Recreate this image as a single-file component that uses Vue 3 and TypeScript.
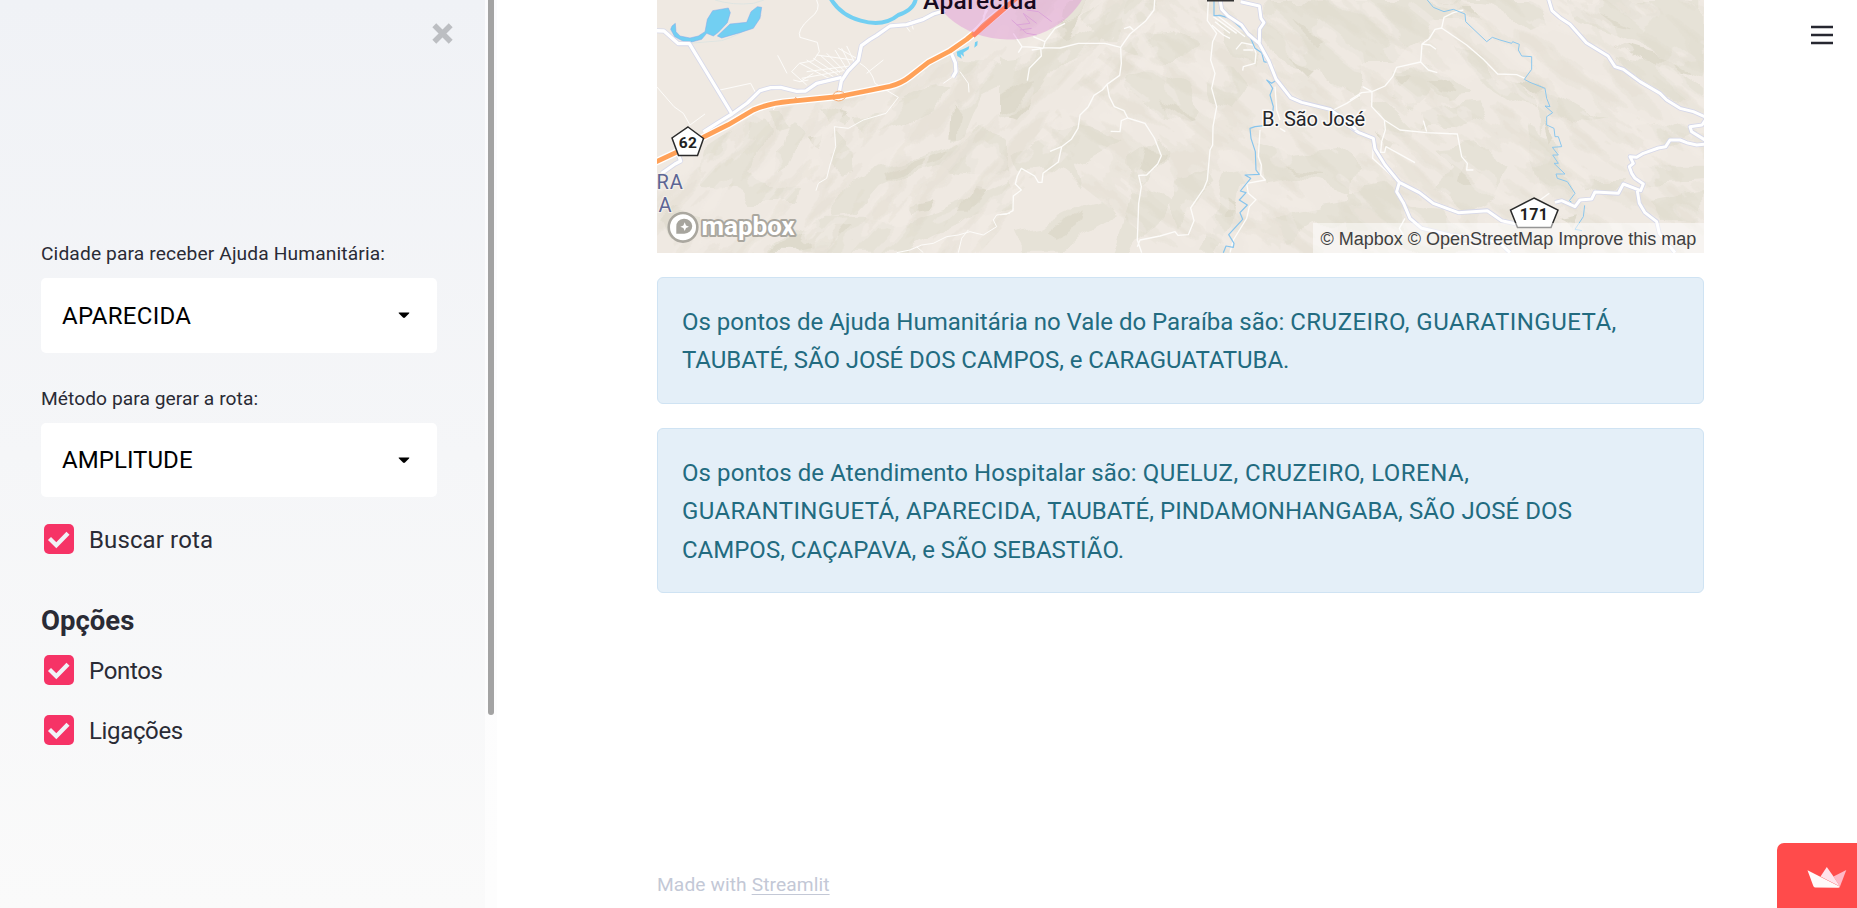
<script setup lang="ts">
import { ref } from 'vue'

interface Run {
  text: string
  fit: string
}

const selects = ref([
  { label: 'Cidade para receber Ajuda Humanitária:', value: 'APARECIDA', kind: 'city' },
  { label: 'Método para gerar a rota:', value: 'AMPLITUDE', kind: 'method' },
])

const search = ref(true)
const options = ref([
  { label: 'Pontos', checked: true },
  { label: 'Ligações', checked: true },
])

const notices: Run[][][] = [
  [
    [
      { text: 'Os pontos de Ajuda Humanitária no Vale do Paraíba são: ', fit: 'plain' },
      { text: 'CRUZEIRO, GUARATINGUETÁ,', fit: 'loose' },
    ],
    [{ text: 'TAUBATÉ, SÃO JOSÉ DOS CAMPOS, e CARAGUATATUBA.', fit: 'snug' }],
  ],
  [
    [
      { text: 'Os pontos de Atendimento Hospitalar são: ', fit: 'lead' },
      { text: 'QUELUZ, CRUZEIRO, LORENA,', fit: 'loose' },
    ],
    [
      { text: 'GUARANTINGUETÁ, APARECIDA, ', fit: 'caps' },
      { text: 'TAUBATÉ, PINDAMONHANGABA, SÃO JOSÉ DOS', fit: 'caps-end' },
    ],
    [{ text: 'CAMPOS, CAÇAPAVA, e SÃO SEBASTIÃO.', fit: 'plain' }],
  ],
]

/* Hill shading, drawn in thirds of a pixel from three neighbouring origins. */
const shadeWest = [
  'M170 430L240 390L300 350L330 370L300 410L320 450L290 520L350 560L450 570L440 600L300 600L240 570L150 560Z',
  'M360 330L400 330L420 390L370 400Z', 'M400 410L440 370L470 400L430 460L410 500L380 520Z',
  'M500 320L560 330L620 360L600 390L540 370Z', 'M570 400L600 430L605 520L570 530L540 500Z',
  'M620 350L690 340L740 300L850 250L900 270L850 330L780 370L700 400L640 400Z',
  'M650 170L700 110L790 80L880 90L900 140L830 170L760 190L700 210Z',
  'M940 190L1060 190L1080 240L1000 280L950 400L900 420L910 300Z',
  'M590 540L700 500L800 470L900 440L990 390L1080 410L1080 520L970 520L860 500L760 530L690 560L620 640L540 650Z',
  'M340 758L450 690L520 650L640 650L760 670L860 640L960 600L1080 540L1080 620L900 690L760 758Z',
  'M30 660L80 620L150 640L120 700L60 720Z', 'M330 360L360 400L300 490L270 500L290 430Z',
]
const shadeWestDeep = [
  'M700 520L790 480L900 450L880 480L780 510L710 545Z', 'M350 758L470 690L600 680L540 740L440 758Z',
  'M970 560L1010 570L960 650L930 650Z', 'M900 320L930 360L920 410L895 410Z', 'M760 620L850 600L830 630L770 640Z',
  'M480 410L520 400L500 450Z', 'M580 335L610 345L590 370Z',
]
const shadeMid = [
  'M0 170L90 160L130 120L240 90L300 110L260 160L180 190L120 280L60 330L0 350Z',
  'M240 60L340 0L460 0L440 60L380 130L300 130Z', 'M200 0L260 0L240 50L190 80Z',
  'M380 230L470 200L560 250L600 330L560 370L470 340L400 300Z', 'M330 140L430 100L520 90L600 130L560 180L450 180Z',
  'M40 470L160 390L240 380L300 400L360 420L320 450L230 500L250 560L200 520L130 500L60 510Z',
  'M390 470L480 410L500 450L430 560L520 600L480 660L420 720L400 760L350 758L400 600Z',
  'M530 540L620 510L640 560L570 620L540 680L510 620Z', 'M620 200L700 210L740 260L690 330L640 300Z',
  'M670 520L740 500L720 600L690 680L650 758L600 758L640 640Z', 'M790 0L1080 0L1080 290L960 220L860 200L790 110Z',
  'M770 430L860 460L1000 440L1080 500L1060 580L900 530L800 550Z', 'M820 650L960 620L1080 600L1080 670L940 670L860 720Z',
  'M30 700L130 680L250 620L330 600L360 640L250 700L180 758L60 758Z', 'M650 60L760 110L780 190L700 170Z',
]
const shadeMidDeep = [
  'M0 290L60 250L110 240L50 320L0 340Z', 'M440 440L490 450L460 510L420 510Z', 'M150 80L240 50L200 110Z',
  'M480 310L580 360L540 370Z', 'M690 590L720 600L690 660L665 660Z', 'M870 40L980 130L960 150Z', 'M860 170L950 220L930 240Z',
  'M150 690L240 640L220 690L160 720Z', 'M30 340L100 300L60 350Z', 'M850 500L960 520L940 530Z',
]
const shadeEast = [
  'M0 0L230 0L320 30L340 60L250 60L210 130L130 180L0 180Z', 'M270 0L430 20L530 90L590 70L540 0Z',
  'M120 210L250 190L310 230L360 290L300 300L240 260L190 320L130 300Z', 'M210 330L380 310L410 350L320 390L220 390Z',
  'M60 300L130 330L190 390L180 470L120 420Z', 'M250 440L380 430L470 500L430 600L350 640L250 560L310 500Z',
  'M320 130L400 170L440 230L520 250L560 330L500 320L420 270L350 200Z', 'M650 0L1060 0L1060 240L960 200L900 150L780 100L680 60Z',
  'M800 170L980 210L1060 270L1060 310L940 280L840 220Z', 'M560 270L650 300L770 370L690 360L600 330L570 410Z',
  'M520 390L620 430L650 520L670 590L600 640L560 560L540 480Z', 'M860 380L950 360L1040 400L960 430L880 430Z',
  'M880 500L1060 500L1060 540L900 550Z', 'M900 600L1060 570L1060 660L930 660Z', 'M680 540L820 540L800 570L700 580Z',
  'M0 580L110 560L180 620L280 630L390 758L200 758L60 690L0 700Z',
]
const shadeEastDeep = [
  'M700 20L850 90L760 70Z', 'M790 130L960 180L1020 220L880 190Z', 'M240 240L300 240L320 280L270 270Z',
  'M340 490L400 520L380 560L330 540Z', 'M120 220L180 220L150 260Z', 'M80 400L140 430L120 460Z',
  'M580 360L620 420L600 440Z', 'M300 20L360 20L400 60L350 50Z', 'M510 250L590 260L560 290Z', 'M640 650L690 640L670 690Z',
]

const whiteRoads = [
  'M18 92L42 93L85 131L118 131L166 210L246 342', 'M160 396L205 367L246 342L292 309L330 272L362 263L392 262L440 274L467 273L500 250L575 232',
  'M568 275L574 243L594 213L625 181L634 137L660 118L680 106L720 78L770 74L820 58L850 42L886 31',
  'M904 160L916 188L918 215L908 232', 'M35 520L75 492L92 483L84 462',
]
const valleyRoads = [
  'M1709 -10L1715 28L1734 48L1774 74L1794 102L1828 131L1857 184L1878 237L1922 293L1955 307L2040 328L2095 368L2118 389',
  'M1772 5L1828 18L1833 55L1842 68L1829 87L1828 128',
]
const eastRoads = [
  'M595 -5L606 32L630 53L660 73L709 128L774 168L795 200L820 208L870 245L930 280L950 300L990 325L1030 335L1070 353',
  'M1070 355L1056 375L1020 380L1025 395L1065 420M1070 432L1040 435L1010 428L990 420L960 420L947 440L925 444L880 460L860 472L840 470L850 490L838 500L845 520L855 535L880 552L872 572L820 552L805 580L735 576L725 597L690 600L675 620L635 602L615 607M862 572L868 610L885 638L920 665L928 700L975 758',
  'M-30 360L25 397L70 415L75 447L105 495L148 547L208 578L250 610L325 638L412 632L455 662L500 672M148 547L140 575L160 608L180 655L215 685L300 705L390 715L450 730L480 758',
]
const highway = 'M15 487L90 452L165 409L235 374L310 330Q355 310 420 304L570 289L650 273L720 259Q755 250 780 230L835 187L900 153L950 118L1080 10'
</script>

<template>
  <div class="app">
    <aside class="sidebar">
      <div class="controls">
        <button class="close" aria-label="Fechar">
          <svg width="21" height="21" viewBox="0 0 21 21"><path d="M2.3 2.3L18.7 18.7M18.7 2.3L2.3 18.7" stroke="#bcbec2" stroke-width="5.5" /></svg>
        </button>
        <div v-for="s in selects" :key="s.kind" class="field">
          <div class="label" :class="s.kind">{{ s.label }}</div>
          <div class="select" :class="s.kind">
            <span>{{ s.value }}</span>
            <svg width="12" height="7" viewBox="0 0 12 7"><path d="M0.8 0.5H11.2Q11.6 1 11 1.6L7 5.6Q6 6.4 5 5.6L1 1.6Q.4 1 .8 .5Z" fill="#000" /></svg>
          </div>
        </div>
        <label class="check" @click="search = !search">
          <span class="box" :class="{ off: !search }"><svg v-if="search" width="30" height="30" viewBox="0 0 30 30"><path d="M5.5 14.5L12.3 21.2L24 9.3" fill="none" stroke="#f0f2f6" stroke-width="4.3" /></svg></span>
          <span class="check-text">Buscar rota</span>
        </label>
        <h2>Opções</h2>
        <label v-for="o in options" :key="o.label" class="check option" @click="o.checked = !o.checked">
          <span class="box" :class="{ off: !o.checked }"><svg v-if="o.checked" width="30" height="30" viewBox="0 0 30 30"><path d="M5.5 14.5L12.3 21.2L24 9.3" fill="none" stroke="#f0f2f6" stroke-width="4.3" /></svg></span>
          <span class="check-text tight">{{ o.label }}</span>
        </label>
      </div>
      <div class="track"><div class="thumb"></div></div>
    </aside>

    <main class="main">
      <div class="map">
        <svg width="1047" height="253" viewBox="657 0 1047 253">
          <defs>
            <filter id="relief" x="0" y="0" width="100%" height="100%" color-interpolation-filters="sRGB">
              <feTurbulence type="fractalNoise" baseFrequency="0.017 0.05" numOctaves="3" seed="11" />
              <feColorMatrix values="0 0 0 0 .86  0 0 0 0 .845  0 0 0 0 .785  4 0 0 0 -1.85" />
              <feComponentTransfer><feFuncA type="discrete" tableValues="0 .4 .6 .85" /></feComponentTransfer>
              <feGaussianBlur stdDeviation=".5" />
            </filter>
            <filter id="lights" x="0" y="0" width="100%" height="100%" color-interpolation-filters="sRGB">
              <feTurbulence type="fractalNoise" baseFrequency="0.02 0.05" numOctaves="2" seed="4" />
              <feColorMatrix values="0 0 0 0 .945  0 0 0 0 .922  0 0 0 0 .897  4 0 0 0 -1.9" />
              <feComponentTransfer><feFuncA type="discrete" tableValues="0 .5 .8" /></feComponentTransfer>
              <feGaussianBlur stdDeviation=".5" />
            </filter>
            <filter id="rough" x="-5%" y="-5%" width="110%" height="110%">
              <feTurbulence type="fractalNoise" baseFrequency="0.035" numOctaves="2" seed="7" />
              <feDisplacementMap in="SourceGraphic" scale="20" xChannelSelector="R" yChannelSelector="G" />
              <feGaussianBlur stdDeviation=".6" />
            </filter>
            <clipPath id="hills"><path d="M657 180L700 150L757 112L850 96L905 78L950 50L1010 5V0H1704V253H657Z" /></clipPath>
            <clipPath id="valley"><path d="M1600 -20H2120V420H1600Z" /></clipPath>
          </defs>
          <rect x="657" width="1047" height="253" fill="#efe9e2" />
          <g clip-path="url(#hills)">
            <g filter="url(#rough)" fill="#e6e2d7">
              <g transform="translate(650 0) scale(.33333)"><path v-for="d in shadeWest" :key="d" :d="d" /><path v-for="d in shadeWestDeep" :key="d" :d="d" fill="#dedacc" /></g>
              <g transform="translate(1000 0) scale(.33333)"><path v-for="d in shadeMid" :key="d" :d="d" /><path v-for="d in shadeMidDeep" :key="d" :d="d" fill="#dedacc" /></g>
              <g transform="translate(1350 0) scale(.33333)"><path v-for="d in shadeEast" :key="d" :d="d" /><path v-for="d in shadeEastDeep" :key="d" :d="d" fill="#dedacc" /></g>
            </g>
            <g transform="rotate(-48 900 126)">
              <rect x="600" y="-250" width="560" height="520" filter="url(#lights)" />
              <rect x="600" y="-250" width="560" height="520" filter="url(#relief)" opacity=".42" />
            </g>
            <g transform="rotate(38 1450 126)">
              <rect x="1130" y="-240" width="620" height="640" filter="url(#lights)" />
              <rect x="1130" y="-240" width="620" height="640" filter="url(#relief)" opacity=".42" />
            </g>
          </g>

          <g transform="translate(650 0) scale(.33333)" fill="none" stroke-linejoin="round">
            <path d="M195 0Q250 17 310 10L342 0M118 130L215 122Q270 105 300 80L335 45" stroke="#dfe5e2" stroke-width="3" />
            <path d="M66 78L76 70L78 95L90 108L120 114L145 108L165 95L172 58L188 32L235 24L241 38L232 68L205 97L190 108L170 100L155 118L125 126L100 124L74 110L62 88Z" fill="#72cff2" stroke="#84a6ea" stroke-width="1.5" />
            <path d="M240 72L290 67L303 35L322 20L335 22L330 55L310 85L270 98L215 114L202 108Z" fill="#72cff2" stroke="#84a6ea" stroke-width="1.5" />
            <path d="M541 -6Q570 45 632 62Q700 82 745 45Q795 28 798 -8" stroke="#72cff2" stroke-width="12" />
            <path d="M920 155L945 145L958 138L956 148L940 158L942 170L932 162L935 176L922 168ZM975 127L983 123L982 136L973 143Z" fill="#72cff2" />
            <g stroke="#fdfcfa" stroke-width="3">
              <path d="M500 0Q515 30 480 55Q440 90 450 112L502 127L508 155L490 182L448 190L425 215L470 255M383 166L411 220M210 270L302 250L322 288M20 260L72 320L100 340L120 375M120 375L165 342" />
              <path d="M450 190L540 237M470 180L550 230M490 175L565 225M510 165L570 218M530 160L585 215M555 150L592 210M575 145L603 200M590 138L614 188M470 215L600 198M455 235L580 212M500 165L610 180M565 145L620 175M450 245L490 220" />
              <path d="M630 190Q665 210 675 250L745 292L708 340L640 360L595 385L553 380L557 440L540 495L530 535L505 550L498 572M650 220L700 180M765 75L780 95M780 60L790 88M370 330L380 310L450 300M430 240L450 245L475 240" />
              <path d="M1080 640L1040 645L1030 660L1040 680L1000 705L960 695L925 705L890 710L850 730L815 735L780 750L740 758M955 690L935 715L925 758M880 250L912 228M930 215L955 250L957 277M800 740L820 758" />
            </g>
            <path v-for="d in whiteRoads" :key="d" :d="d" stroke="#d7d9ea" stroke-width="15" />
            <path v-for="d in whiteRoads" :key="d + 'w'" :d="d" stroke="#fff" stroke-width="10" />
          </g>

          <g transform="translate(1000 0) scale(.33333)" fill="none" stroke-linejoin="round">
            <g stroke="#fdfcfa" stroke-width="4">
              <path d="M464 0L462 30L436 64L390 102L370 130L362 142L364 190L359 226L321 253L307 270L282 286L265 320L240 345L234 385L214 418L185 440L175 486L129 520L126 547L115 547L104 528L64 505L52 528L46 552L64 570L40 588L39 632L20 642L0 644" />
              <path d="M185 440L150 454M321 253L328 290L343 320L372 332L383 354L435 370L463 414L484 467L473 492L440 525L416 526L424 560L416 610L412 720L425 758M383 354L364 362L360 395L332 394M412 740L420 720L480 708L525 695L534 706L565 704L582 662L572 624L612 565L622 540L630 450L638 435L639 380L650 320L635 265L645 220L632 180L638 125L650 100L622 62L625 0" />
              <path d="M362 142L315 130L235 130L180 144L122 143L66 140L55 158M66 140L40 100M122 143L124 168L88 205L82 242M100 110L135 125L130 145M135 125L165 85L195 70M95 150L130 145M372 86L390 80L400 90" />
              <path d="M640 50L710 100M645 65L690 100M635 75L670 105L690 115M650 45L735 110M708 148L725 128L760 135L768 160L765 190L730 200L728 212M730 150L760 150M825 260L830 330L840 360M780 390L775 470L784 495L782 525L796 540L740 550L745 580L768 599L748 620L740 655L700 720L690 758M1000 330L1040 310L1080 285M840 385L856 395" />
            </g>
            <path d="M642 0L642 47L660 46L690 55L735 95L750 110L765 145L785 158L792 185L800 187M830 240L815 250L800 240L810 252L818 265L810 285L820 320L817 350M800 376L765 380L750 385L753 415L766 455L768 510L778 523L735 525L752 535L721 573L738 578L718 600L742 615L720 638L728 658L686 704L702 730L700 742L678 738L670 758" stroke="#86c4ed" stroke-width="3.5" />
            <g stroke="#dbb9dc" stroke-width="3"><path d="M35 60L80 100L110 105M50 75L90 70L70 40L110 70M60 90L95 85M80 30L115 35L155 65" /></g>
          </g>

          <g transform="translate(1350 0) scale(.33333)" fill="none" stroke-linejoin="round">
            <g stroke="#fdfcfa" stroke-width="4">
              <path d="M340 30L310 38L282 52L275 84L255 88L238 116L216 132L212 186L140 202L128 230L105 258L66 275L35 278L0 300M212 186L235 210L262 218M275 84L350 135L400 178L443 222L500 224L525 235M216 132L240 135L258 148M66 275L65 320L103 360L106 390L95 425L92 457L104 457L108 440L195 488M103 360L150 390L230 398L322 402L335 470L352 490L350 510L370 510M220 362L230 395M66 275L38 260M70 430L68 475L145 545M165 655L148 685L160 705M400 745L350 730L280 740M570 600L598 580" />
            </g>
            <path d="M232 0L250 22L282 35L310 28L345 42L347 65L410 125L427 112L450 120L485 130L488 125L508 133L505 150L515 168L545 170L545 208L523 238L540 247L585 265L590 295L600 320L585 318L608 338L590 350L590 375L612 385L615 410L625 410L635 440L607 442L625 465L608 465L625 490L612 490L645 522L618 522L622 535L652 545L675 580L658 602L665 607M704 616L700 650L675 688L696 692" stroke="#8bc7ee" stroke-width="3" />
            <path v-for="d in eastRoads" :key="d" :d="d" stroke="#d5d7e9" stroke-width="14" />
            <path v-for="d in eastRoads" :key="d + 'w'" :d="d" stroke="#fff" stroke-width="9" />
          </g>
          <g transform="translate(650 0) scale(.33333)" fill="none" stroke-linejoin="round">
            <path v-for="d in valleyRoads" :key="d" :d="d" stroke="#d5d7e9" stroke-width="14" clip-path="url(#valley)" />
            <path v-for="d in valleyRoads" :key="d + 'w'" :d="d" stroke="#fff" stroke-width="9" clip-path="url(#valley)" />
            <path :d="highway" stroke="#fff" stroke-width="22" />
            <path d="M540 285Q545 300 565 303Q585 303 592 280M548 285Q565 262 588 284M432 302L437 292L442 300" stroke="#f6ad75" stroke-width="3" />
            <path :d="highway" stroke="#ffa158" stroke-width="14" />
            <path d="M1000 50L1012 30M970 95L1000 60L1010 20" stroke="#fff" stroke-width="6" />
          </g>
          <ellipse cx="1008" cy="-36" rx="84" ry="75.5" fill="#dc83d2" fill-opacity=".38" />
          <path d="M973 36L1020 -5" stroke="#ff8266" stroke-width="4.5" />
          <text class="town" x="923" y="8.5">Aparecida</text>
          <path d="M1207 0H1234" stroke="#333" stroke-width="3" />
          <text class="village" x="1262" y="125.5">B. São José</text>
          <path d="M688 127L703.5 138.5L697.5 155.5H678.5L672 138Z" fill="#fff" stroke="#2b2b2b" stroke-width="1.5" />
          <text class="shield" x="688" y="148">62</text>
          <path d="M1534 198L1558 210L1551 227.5H1517.5L1510.5 210Z" fill="#fff" stroke="#2b2b2b" stroke-width="1.5" />
          <text class="shield s171" x="1534" y="219.5">171</text>
          <text class="region" x="656.5" y="188.5">RA</text>
          <text class="region" x="658.5" y="211.5">A</text>
          <g>
            <circle cx="683" cy="227.3" r="14.3" fill="#fff" stroke="#aaa79f" stroke-width="2.6" />
            <path d="M676.3 233.7V227A8 7.5 0 1 1 684 233.7Z" fill="#a7a59e" />
            <path d="M684.7 222.2L686 225.5L689 226.7L686 228L684.7 231L683.4 228L680.3 226.7L683.4 225.5Z" fill="#fff" />
            <text class="logo" x="701.5" y="235">mapbox</text>
          </g>
        </svg>
        <div class="attribution">© Mapbox © OpenStreetMap Improve this map</div>
      </div>

      <div v-for="(n, i) in notices" :key="i" class="notice">
        <div v-for="(l, j) in n" :key="j" class="line"><span v-for="r in l" :key="r.text" :class="r.fit">{{ r.text }}</span></div>
      </div>

      <footer>Made with <a>Streamlit</a></footer>
    </main>

    <svg class="menu" width="22" height="20" viewBox="0 0 22 20"><path d="M0 2H22M0 10H22M0 18H22" stroke="#262730" stroke-width="2.6" /></svg>
    <div class="badge">
      <svg width="40" height="23" viewBox="0 0 40 23">
        <path d="M26.5 10.5L39.3 4L33 20.5Z" fill="#ffb8c6" />
        <path d="M19.8 1L26.5 10.5L33 20.5L13.5 10.5Z" fill="#ffe3ec" />
        <path d="M.5 4.3L33 20.7Q32.5 21.8 31 21.8L8 21.5Q6.8 21.2 6.3 20Z" fill="#fffafa" />
      </svg>
    </div>
  </div>
</template>

<style>
body {
  margin: 0;
  overflow: hidden;
}
</style>

<style scoped>
.app {
  position: relative;
  display: flex;
  width: 1857px;
  height: 908px;
  overflow: hidden;
  background: #fff;
  color: #2a2b35;
  font-family: Roboto, "Open Sans", sans-serif;
}
.sidebar {
  display: flex;
  width: 497px;
  flex: none;
}
.controls {
  box-sizing: border-box;
  display: flex;
  flex-direction: column;
  width: 485px;
  padding: 23px 48px 0 41px;
  background: linear-gradient(#f0f2f6, #fafafa);
}
.track {
  width: 12px;
  background: linear-gradient(#fbfbfd, #fdfdfd);
}
.thumb {
  width: 6px;
  height: 715px;
  margin-left: 3px;
  border-radius: 0 0 3px 3px;
  background: #a3a3a3;
}
.close {
  align-self: flex-end;
  width: 21px;
  height: 21px;
  margin: 0 -16px 195px 0;
  padding: 0;
  border: 0;
  background: none;
}
.close svg {
  display: block;
}
.label {
  height: 29px;
  margin-bottom: 10px;
  font-size: 19.2px;
  line-height: 30px;
  white-space: nowrap;
}
.label.city {
  letter-spacing: 0.13px;
}
.label.method {
  letter-spacing: 0.06px;
}
.select {
  box-sizing: border-box;
  display: flex;
  align-items: center;
  justify-content: space-between;
  height: 75px;
  margin-bottom: 31px;
  padding: 0 27px 0 21px;
  border-radius: 5px;
  background: #fff;
  color: #000;
  font-size: 24px;
  letter-spacing: 0.3px;
}
.select.method {
  height: 74px;
  margin-bottom: 27px;
  letter-spacing: 0.05px;
}
.check {
  display: flex;
  align-items: center;
  gap: 15px;
  height: 30px;
  padding-left: 3px;
}
.option {
  margin-bottom: 30px;
}
.box {
  width: 30px;
  height: 30px;
  border-radius: 5px;
  background: #f63366;
}
.box.off {
  background: #d5d6da;
}
.box svg {
  display: block;
}
.check-text {
  position: relative;
  top: 1px;
  font-size: 24px;
  letter-spacing: 0.12px;
  line-height: 30px;
}
.check-text.tight {
  letter-spacing: -0.35px;
}
h2 {
  height: 40px;
  margin: 46px 0 15px;
  font-size: 27.5px;
  font-weight: 700;
  line-height: 41px;
}
.main {
  display: flex;
  flex-direction: column;
  width: 1047px;
  margin-left: 160px;
}
.map {
  position: relative;
  height: 253px;
  margin-bottom: 24px;
}
.map > svg {
  display: block;
}
.town {
  fill: #180a1e;
  font: 500 24.5px Roboto, sans-serif;
  letter-spacing: 0.4px;
}
.village {
  fill: #25262b;
  font: 20px Roboto, sans-serif;
  letter-spacing: -0.2px;
  paint-order: stroke;
  stroke: #fff;
  stroke-opacity: 0.75;
  stroke-width: 3px;
}
.shield {
  fill: #222;
  font: 700 15.5px Roboto, sans-serif;
  letter-spacing: 0.3px;
  text-anchor: middle;
}
.s171 {
  font-size: 16px;
}
.region {
  fill: #5c6594;
  font: 20px Roboto, sans-serif;
  letter-spacing: 1px;
  paint-order: stroke;
  stroke: #f4f0ea;
  stroke-width: 2px;
}
.logo {
  fill: #fff;
  font: 700 26px Roboto, sans-serif;
  paint-order: stroke;
  stroke: #aaa79f;
  stroke-linejoin: round;
  stroke-width: 4px;
}
.attribution {
  position: absolute;
  right: 0;
  bottom: 0;
  box-sizing: border-box;
  width: 391px;
  height: 30px;
  padding-left: 7.5px;
  background: rgba(255, 255, 255, 0.5);
  color: #404040;
  font: 18px/32px "Liberation Sans", Arial, sans-serif;
  white-space: nowrap;
}
.notice {
  box-sizing: border-box;
  margin-bottom: 24px;
  padding: 25px 24px 23px;
  border: 1px solid #cfe3f3;
  border-radius: 6px;
  background: #e4eff8;
  color: #226b80;
  font-size: 24px;
  line-height: 38.4px;
}
.line {
  white-space: pre;
}
.lead {
  letter-spacing: 0.08px;
}
.loose {
  letter-spacing: 0.48px;
}
.caps {
  letter-spacing: 0.37px;
}
.caps-end {
  letter-spacing: 0.06px;
}
.snug {
  letter-spacing: -0.05px;
}
footer {
  margin-top: 253px;
  color: #c3c8d6;
  font-size: 19.2px;
  letter-spacing: 0.1px;
  line-height: 30px;
}
footer a {
  text-decoration: underline;
  text-decoration-thickness: 1px;
  text-underline-offset: 3px;
}
.menu {
  position: absolute;
  top: 25px;
  left: 1811px;
}
.badge {
  position: absolute;
  right: 0;
  bottom: 0;
  box-sizing: border-box;
  width: 80px;
  height: 65px;
  padding: 23px 0 0 30px;
  border-radius: 7px 0 0;
  background: #ff4b4b;
}
.badge svg {
  display: block;
}
</style>
